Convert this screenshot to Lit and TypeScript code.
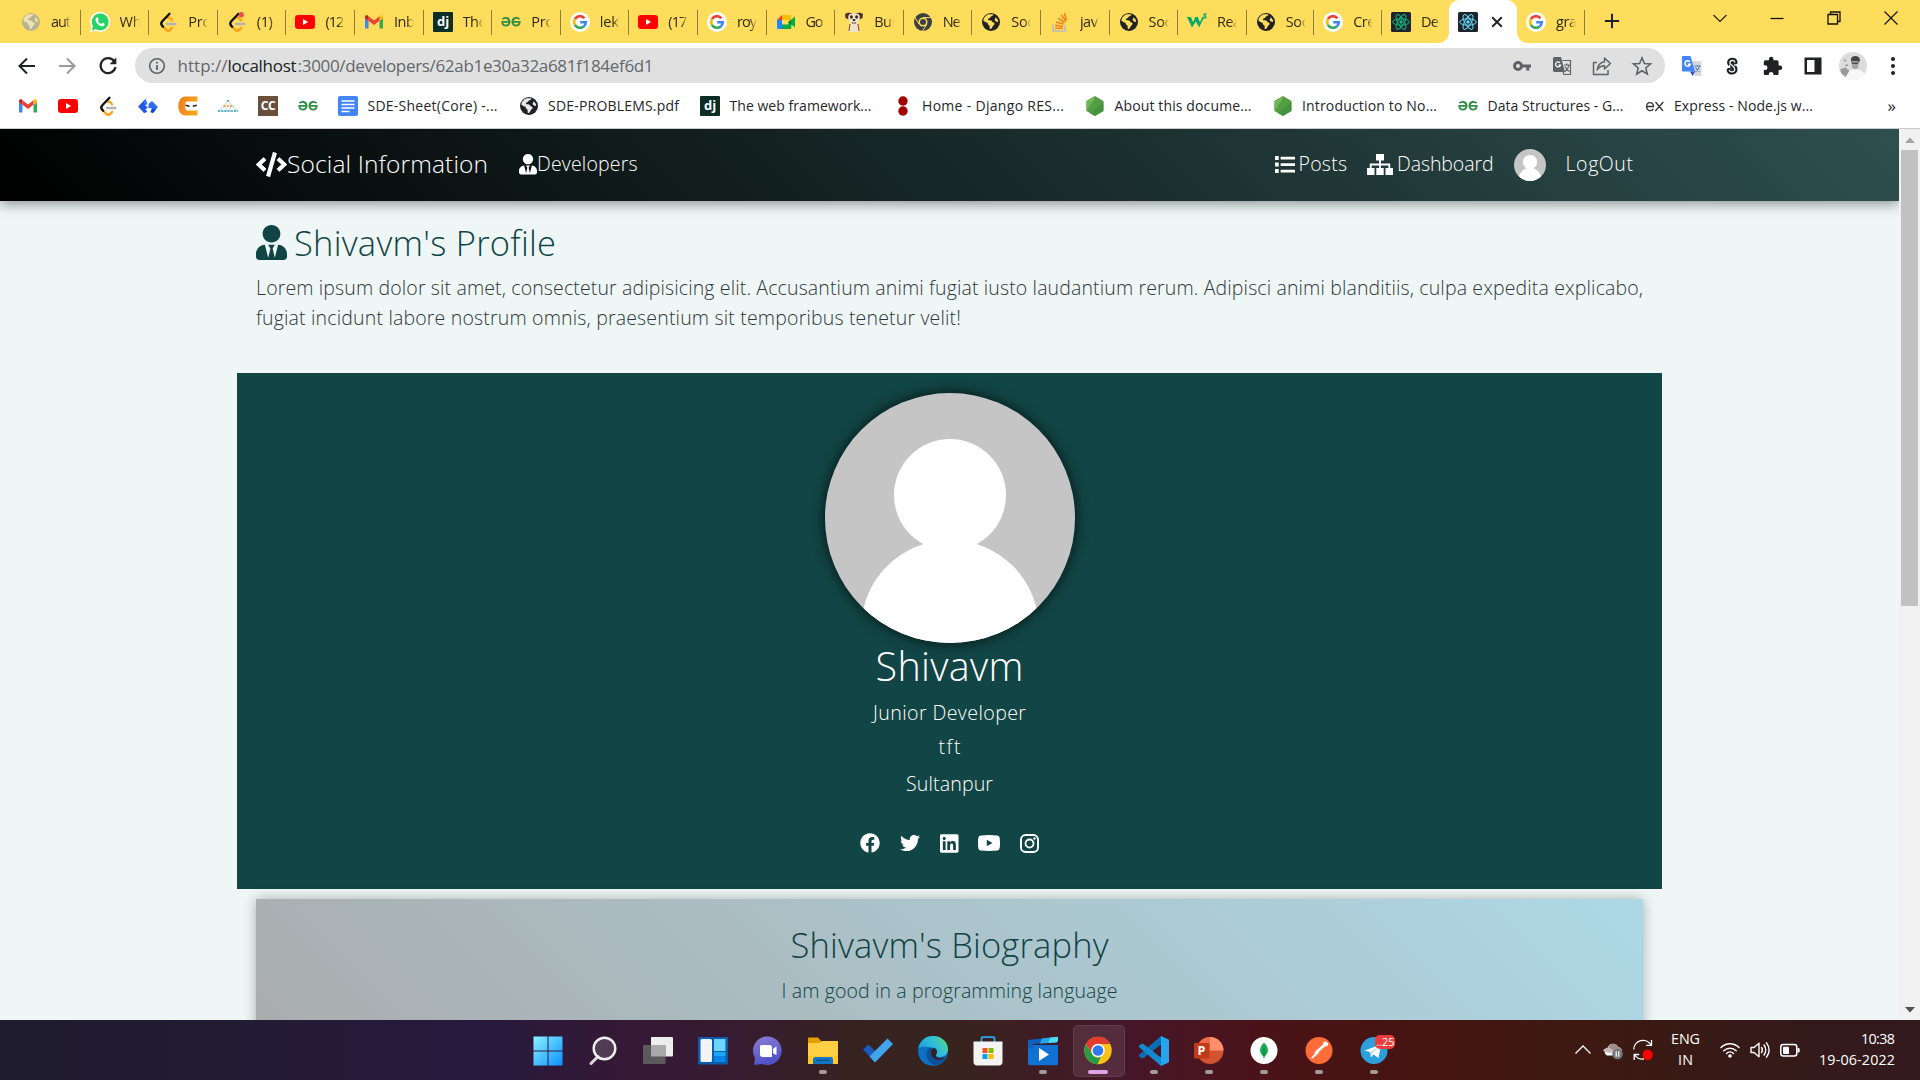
import { LitElement, html, svg, css } from "lit";
import { customElement, property } from "lit/decorators.js";

/** A single line of text whose tracking is adjusted to fill a given width. */
@customElement("text-run")
class TextRun extends LitElement {
  @property() text = "";
  @property({ type: Number }) w = 0;
  static styles = css`
    :host { display: block; white-space: nowrap; flex: none; }
    span { display: inline-block; white-space: pre; }
  `;
  render() {
    return html`<span>${this.text}</span>`;
  }
  updated() {
    const s = this.renderRoot.querySelector("span") as HTMLElement;
    s.style.letterSpacing = "0";
    const n = Math.max(1, this.text.length - 1);
    const natural = s.getBoundingClientRect().width;
    if (this.w) {
      s.style.letterSpacing = (this.w - natural) / n + "px";
      this.style.width = this.w + "px";
    }
  }
}

const t = (text: string, w = 0, cls = "") => html`<text-run class=${cls} .text=${text} .w=${w}></text-run>`;

const USER_TIE = "M224 256c70.7 0 128-57.3 128-128S294.7 0 224 0 96 57.3 96 128s57.3 128 128 128zm95.8 32.6L272 480l-32-136 32-56h-96l32 56-32 136-47.8-191.4C56.9 292 0 350.3 0 422.4V464c0 26.5 21.5 48 48 48h352c26.5 0 48-21.5 48-48v-41.6c0-72.1-56.9-130.4-128.2-133.8z";
const CODE = "M278.9 511.5l-61-17.7c-6.4-1.8-10-8.5-8.2-14.9L346.2 8.7c1.8-6.4 8.5-10 14.9-8.2l61 17.7c6.4 1.8 10 8.5 8.2 14.9L293.8 503.3c-1.9 6.4-8.5 10.1-14.9 8.2zm-114-112.2l43.5-46.4c4.6-4.9 4.3-12.7-.8-17.2L117 256l90.6-79.7c5.1-4.5 5.5-12.3.8-17.2l-43.5-46.4c-4.5-4.8-12.1-5.1-17-.5L3.8 247.2c-5.1 4.7-5.1 12.8 0 17.5l144.1 135.1c4.9 4.6 12.5 4.4 17-.5zm327.2.6l144.1-135.1c5.1-4.7 5.1-12.8 0-17.5L492.1 112.1c-4.8-4.5-12.4-4.3-17 .5L431.6 159c-4.6 4.9-4.3 12.7.8 17.2L523 256l-90.6 79.7c-5.1 4.5-5.5 12.3-.8 17.2l43.5 46.4c4.5 4.9 12.1 5.1 17 .6z";
const FACEBOOK = "M504 256C504 119 393 8 256 8S8 119 8 256c0 123.78 90.69 226.38 209.25 245V327.69h-63V256h63v-54.64c0-62.15 37-96.48 93.67-96.48 27.14 0 55.52 4.84 55.52 4.84v61h-31.28c-30.8 0-40.41 19.12-40.41 38.73V256h68.78l-11 71.69h-57.78V501C413.31 482.38 504 379.78 504 256z";
const TWITTER = "M459.37 151.716c.325 4.548.325 9.097.325 13.645 0 138.72-105.583 298.558-298.558 298.558-59.452 0-114.68-17.219-161.137-47.106 8.447.974 16.568 1.299 25.34 1.299 49.055 0 94.213-16.568 130.274-44.832-46.132-.975-84.792-31.188-98.112-72.772 6.498.974 12.995 1.624 19.818 1.624 9.421 0 18.843-1.3 27.614-3.573-48.081-9.747-84.143-51.98-84.143-102.985v-1.299c13.969 7.797 30.214 12.67 47.431 13.319-28.264-18.843-46.781-51.005-46.781-87.391 0-19.492 5.197-37.36 14.294-52.954 51.655 63.675 129.3 105.258 216.365 109.807-1.624-7.797-2.599-15.918-2.599-24.04 0-57.828 46.782-104.934 104.934-104.934 30.213 0 57.502 12.67 76.67 33.137 23.715-4.548 46.456-13.32 66.599-25.34-7.798 24.366-24.366 44.833-46.132 57.827 21.117-2.273 41.584-8.122 60.426-16.243-14.292 20.791-32.161 39.308-52.628 54.253z";
const LINKEDIN = "M416 32H31.9C14.3 32 0 46.5 0 64.3v383.4C0 465.5 14.3 480 31.9 480H416c17.6 0 32-14.5 32-32.3V64.3c0-17.8-14.4-32.3-32-32.3zM135.4 416H69V202.2h66.5V416zm-33.2-243c-21.3 0-38.5-17.3-38.5-38.5S80.9 96 102.2 96c21.2 0 38.5 17.3 38.5 38.5 0 21.3-17.2 38.5-38.5 38.5zm282.1 243h-66.4V312c0-24.8-.5-56.7-34.5-56.7-34.6 0-39.9 27-39.9 54.9V416h-66.4V202.2h63.7v29.2h.9c8.9-16.8 30.6-34.5 62.9-34.5 67.2 0 79.7 44.3 79.7 101.9V416z";

const globe = (dark: string, land: string) => svg`
  <circle cx="10" cy="10" r="9" fill=${dark}/>
  <path fill=${land} d="M7 2.6c1.6-.6 4-.6 5.500 0-.4 1.300-1.400 1.700-2.600 1.900-.5 1.300-1.500 2-2.900 2.300-.3 1 .3 1.500 1.400 1.500 1.800-.2 2.700.6 3.200 1.900 1.600 0 2.300 1 1.900 2.100-.8 1.200-1.900 1.700-2.400 3.200-.4 1-1.400 1.600-2.300 1.600l-.3-3.700c-1.200-.4-1.900-1.300-1.900-2.600-1.600-.3-3.100-1-4.300-2.200C2.600 6 4.500 3.600 7 2.600zM14.600 5.200c1.500 1.200 2.500 2.900 2.600 4.600-1.400.4-3-.2-3.600-1.700.2-1.200.9-1.600 1-2.900z"/>`;
const react = (bg: string, fg: string) => svg`
  <rect width="20" height="20" rx="1.500" fill=${bg}/>
  <g fill="none" stroke=${fg} stroke-width="1"><ellipse cx="10" cy="10" rx="8.300" ry="3.200"/><ellipse cx="10" cy="10" rx="8.300" ry="3.200" transform="rotate(60 10 10)"/><ellipse cx="10" cy="10" rx="8.300" ry="3.200" transform="rotate(120 10 10)"/></g><circle cx="10" cy="10" r="1.700" fill=${fg}/>`;
const leet = svg`<g fill="none" stroke-linecap="round" stroke-width="2.300"><path stroke="#b3b3b3" d="M9 12h8.500"/><path stroke="#ffa116" d="M4.600 14l3.400 3.600c1.300 1.300 3.200 1.300 4.500 0l1.700-1.700M14 8.200l-1.600-1.700c-1-.9-2.300-1.200-3.500-.8"/><path stroke="#111" d="M11.500 1.800L4.300 9.300c-1.200 1.300-1.200 3.300 0 4.600l.8.900"/></g>`;
const youtube = svg`<rect x="0" y="3" width="20" height="14" rx="3.200" fill="#f00"/><path fill="#fff" d="M8 7l5.200 3L8 13z"/>`;
const gmail = svg`<path fill="#4285f4" d="M1 16.500h3.500V8.800L1 6z"/><path fill="#34a853" d="M15.500 16.500H19V6l-3.500 2.800z"/><path fill="#fbbc04" d="M15.500 4.200v4.600L19 6.200V5c0-1.600-1.700-2.300-2.900-1.400z"/><path fill="#ea4335" d="M4.500 8.800V4.200L10 8.400l5.500-4.200v4.600L10 13z"/><path fill="#c5221f" d="M1 5v1.200l3.500 2.600V4.200L3.900 3.600C2.700 2.700 1 3.400 1 5z"/>`;
const google = svg`<circle cx="10" cy="10" r="10" fill="#fff"/><g fill="none" stroke-width="2.600"><path stroke="#ea4335" d="M14.500 6.300A5.800 5.800 0 0 0 4.900 7.200"/><path stroke="#fbbc05" d="M4.900 7.200a5.800 5.800 0 0 0 0 5.600"/><path stroke="#34a853" d="M4.900 12.800a5.800 5.800 0 0 0 8.800 1.600"/><path stroke="#4285f4" d="M13.700 14.400A5.800 5.800 0 0 0 15.800 10.200H10.200"/></g>`;
const gfg = svg`<g fill="none" stroke="#2f8d46" stroke-width="1.900"><path d="M1.600 7.200c1.500-2 6.700-2 6.900 2.400.1 2.600-1.700 4-3.600 4-2.200 0-3.700-1.600-3.600-3.700h8.200"/><path d="M18.400 7.200c-1.500-2-6.700-2-6.900 2.400-.1 2.600 1.700 4 3.600 4 2.200 0 3.700-1.600 3.600-3.700h-8.200"/></g>`;
const django = svg`<rect width="20" height="20" rx="1" fill="#0c2e25"/><text x="10.200" y="14.200" text-anchor="middle" font-family="Open Sans, sans-serif" font-weight="700" font-size="13" fill="#fff">dj</text>`;
const node = svg`<path fill="#539e43" d="M10 0l8.500 5v10L10 20l-8.500-5V5z"/><path fill="#6cb654" d="M10 0L1.500 5v10L9 4z"/><path fill="#3f8b3c" d="M18.500 6v9L10 20 5 17.500z" opacity=".6"/>`;
const so = svg`<path fill="none" stroke="#bcbbbb" stroke-width="1.600" d="M3 12.500V19h12v-6.500"/><g stroke="#f48024" stroke-width="1.600"><path d="M5 16.200h8M5.200 13.400l7.900.8M6.100 9.900l7.500 2.200M8.200 6.200l6.500 4.300M11.300 2.900l4.600 6.300M14.500 1l1.900 7.500"/></g>`;
const glyphs: Record<string, unknown> = {
  globeGrey: globe("#b9b28f", "#eee3b4"),
  globe: globe("#202124", "#e8eaed"),
  globeTab: globe("#202124", "#ffdd5c"),
  whatsapp: svg`<path fill="#fff" d="M0 20l1.500-5A10 10 0 1 1 5.500 18.700z"/><path fill="#25d366" d="M1.800 18.300l1.200-4A8.400 8.400 0 1 1 6 17.200z"/><path fill="#fff" d="M7 5.300c.5-.2.9 0 1 .4l.7 1.700c.1.600-.7 1.100-.8 1.500.7 1.500 1.800 2.500 3.200 3.100.5-.1 1-1.200 1.400-1.200l2 .9c.5.300-.1 1.900-.7 2.300-3 1.500-8.200-2.900-8.300-6.300 0-.9.700-2.100 1.500-2.400z"/>`,
  leet,
  leetDot: svg`${leet}<circle cx="14.300" cy="2.700" r="2.600" fill="#eb4d4b"/>`,
  youtube, gmail, django, gfg, google, node, so,
  meet: svg`<path fill="#ea4335" d="M1 8l5-5v5z"/><path fill="#fbbc04" d="M6 3h8c.8 0 1.300.5 1.300 1.300V10h-3V8H6z"/><path fill="#2684fc" d="M1 8h5v9H2.300C1.500 17 1 16.500 1 15.700z"/><path fill="#00ac47" d="M6 12.500h6.300V10h3v5.700c0 .8-.5 1.300-1.300 1.300H6zM15.300 7.500L19 4.500v11l-3.700-3z"/><path fill="#00832d" d="M12.300 10l3-2.500v5z"/>`,
  dog: svg`<path fill="#4b3426" d="M1 2l3-1.500L6 1h8l2-.5L19 2l-.5 4-3 1.500h-11L1.500 6z"/><path fill="#f1e3c8" d="M4.500 3.500C5.500 0 14.500 0 15.500 3.500c.8 2.500 0 5-1.500 7.500l1.700 9H4.300L6 11C4.500 8.500 3.700 6 4.500 3.500z"/><ellipse cx="7.400" cy="5" rx="1.500" ry="1.700" fill="#3c2a20"/><ellipse cx="12.600" cy="5" rx="1.500" ry="1.700" fill="#3c2a20"/><ellipse cx="10" cy="8" rx="1.500" ry="1" fill="#222"/><path stroke="#8b5b3b" stroke-width="1.200" fill="none" d="M8 10.500q2 1.500 4 0M6 12l-1 7M14 12l1 7"/>`,
  chromeDark: svg`<circle cx="10" cy="10" r="9" fill="#3c4043"/><circle cx="10" cy="10" r="4.500" fill="#ffdd5c"/><circle cx="10" cy="10" r="3" fill="#3c4043"/><path stroke="#ffdd5c" stroke-width="1" d="M10 5.600h8.500M6.100 12.200L1.900 5.500M13.800 12.300L9.500 19"/>`,
  w3: svg`<path fill="#04aa6d" d="M0 5h3.900l2.300 5.200L8.300 5h2.400l2.300 5.200L15.200 5h1.900l-4.900 10.500L8.900 9.600 5 15.500z"/><path fill="none" stroke="#04aa6d" stroke-width="1.200" d="M16.300 2.100h2.600L17.200 4c2.600 0 2.300 3-.9 2.100"/>`,
  reactGreen: react("#20232a", "#10b981"),
  reactBlue: react("#20232a", "#61dafb"),
  hackr: svg`<path fill="#2457e6" d="M0 10.500L7.500 3 9 7.500 7 9.500l3 1.500-2.500 2.500L9.500 16 6 17z"/><path fill="#3d77f7" d="M5.500 5L7.500 3l2 5-2.500 1.500z"/><path fill="#2f6bf5" d="M10.500 8L14 5l6 6-5 6-2.500-1 1.500-3.500-3.500-.500z"/><path fill="#1747c9" d="M12.500 16L15 17l3-3.500-4-1z"/>`,
  ninja: svg`<defs><linearGradient id="nj" x2="1" y2=".3"><stop stop-color="#ee7c1b"/><stop offset="1" stop-color="#fba41d"/></linearGradient></defs><path fill="url(#nj)" d="M19.500.500v5H9C6.500 5.500 6.500 14.500 9 14.500h10.500v5H7.500C-2 19.500-2 .500 7.500.500z"/><path fill="none" stroke="#222" stroke-width="1.500" d="M7.500 9.200l4 1M18.800 9.200l-4 1"/>`,
  dots: svg`<g fill="none" stroke-width="2.200" stroke-dasharray="2 1.200"><path stroke="#35b5c6" d="M9 5h2.200M0 15h20"/><path stroke="#f2a33c" d="M5.500 10h10"/></g><path fill="none" stroke="#a5b9bd" stroke-width=".7" d="M10 5L1 15h18L10 5zM6 10l4 5 4-5"/>`,
  cc: svg`<rect width="20" height="20" fill="#6b4f3c"/><text x="10" y="14" text-anchor="middle" font-family="Open Sans, sans-serif" font-weight="700" font-size="12" letter-spacing="-.5" fill="#fff">CC</text>`,
  docs: svg`<rect width="20" height="20" rx="2" fill="#4285f4"/><path stroke="#fff" stroke-width="1.700" d="M3.500 5h13M3.500 8.500h13M3.500 12h13M3.500 15.500h8"/>`,
  drf: svg`<circle cx="10" cy="5" r="4.700" fill="#a30000"/><circle cx="10" cy="15" r="4.700" fill="#a30000"/>`,
  ex: svg`<g fill="none" stroke="#333" stroke-width="1.300"><path d="M1.800 10.500h6.700c0-5.500-6.900-5-6.900 0 0 4.800 5.600 5.300 6.700 2.300M10.500 6l7.500 9M18.300 6l-8 9"/></g>`,
  back: svg`<path fill="none" stroke="#202124" stroke-width="2" d="M18 10H3M10 2.500L2.500 10l7.500 7.500"/>`,
  fwd: svg`<path fill="none" stroke="#9a9a9a" stroke-width="2" d="M2 10h15M10 2.500l7.500 7.500-7.500 7.500"/>`,
  reload: svg`<path fill="none" stroke="#202124" stroke-width="2.200" d="M16.200 5.200A7.500 7.500 0 1 0 17.500 11"/><path fill="#202124" d="M18.300 1.500v6.700h-6.700z"/>`,
  info: svg`<circle cx="10" cy="10" r="7.300" fill="none" stroke="#5f6368" stroke-width="1.600"/><path stroke="#5f6368" stroke-width="1.800" d="M10 9v5M10 5.800v1.800"/>`,
  key: svg`<path fill="#5f6368" fill-rule="evenodd" d="M6 5a5 5 0 1 1 0 10A5 5 0 0 1 6 5zm0 3a2 2 0 1 0 0 4 2 2 0 0 0 0-4z"/><path fill="#5f6368" d="M10 8.500h9v3h-1.700v3h-3v-3H10z"/>`,
  translate: svg`<path fill="#5f6368" d="M2.500 1H9l4 15H2.500C1.700 16 1 15.300 1 14.500v-12C1 1.700 1.700 1 2.500 1z"/><path fill="none" stroke="#5f6368" stroke-width="1.200" d="M10.500 4.500h8v14H12l-1-3M12 9h6M15 7.500V9M17 9c-.5 3-2 5-4 6.500M13 10.500c1 2.500 2.500 4 4.500 5"/><path stroke="#fff" fill="none" stroke-width="1.200" d="M8 6.800A2.500 2.500 0 1 0 8.500 9H6.300"/>`,
  share: svg`<path fill="none" stroke="#5f6368" stroke-width="1.500" stroke-linejoin="round" d="M5 6.500H1.500V18.500h14.500V14M12.500 2l6 5.500-6 5.500v-3.300C9 9.700 6.800 11 5.200 14c.4-4.500 3-7.600 7.300-8.300z"/>`,
  star: svg`<path fill="none" stroke="#5f6368" stroke-width="1.600" d="M10 1.800l2.400 5.700 6.100.5-4.700 4 1.500 6-5.300-3.200L4.700 18l1.500-6-4.700-4 6.100-.5z"/>`,
  gtrans: svg`<path fill="#d5d8dc" d="M9 5h9.500c.6 0 1 .4 1 1v13c0 .6-.4 1-1 1H12z"/><path fill="#4285f4" d="M1 0h7.500l4.500 15.500H1c-.6 0-1-.4-1-1V1c0-.6.4-1 1-1z"/><path fill="#3b4cc0" d="M8 15.500h5L10.500 20z"/><path stroke="#fff" fill="none" stroke-width="1.500" d="M7.800 5.800a2.700 2.700 0 1 0 .5 2.500H5.800"/><path stroke="#5b7fa8" fill="none" stroke-width="1.200" d="M12.500 10h6M15.500 9v1M17.500 10c-.5 2.500-2 4.500-4 6M13.500 11.500c1 2 2.500 3.500 4 4.200"/>`,
  scribe: svg`<path fill="none" stroke="#202124" stroke-width="5.400" stroke-linecap="round" stroke-linejoin="round" d="M12.800 6C12 3.800 8 4 7.800 6.500c-.2 3 5.200 3.200 5 7-.3 3-4.600 3-5.400 1"/><path fill="none" stroke="#fff" stroke-width="1.300" stroke-linecap="round" d="M12.800 6C12 3.800 8 4 7.800 6.500c-.2 3 5.200 3.200 5 7-.3 3-4.600 3-5.400 1M7.500 9.500v1.800M12.900 8.300V9.500"/>`,
  puzzle: svg`<path fill="#202124" d="M18 9.500h-1.400V6c0-1-.8-1.700-1.700-1.700h-3.500V2.900a2.200 2.200 0 0 0-4.400 0v1.400H3.500C2.600 4.300 1.800 5 1.800 6v3.300h1.300a2.400 2.400 0 0 1 0 4.800H1.800v3.300c0 1 .8 1.700 1.700 1.700h3.300v-1.300a2.400 2.400 0 0 1 4.700 0v1.300h3.400c.9 0 1.700-.8 1.700-1.700V14H18a2.200 2.200 0 0 0 0-4.400z"/>`,
  panel: svg`<path fill="#202124" fill-rule="evenodd" d="M1.500 1.500h17v17h-17zM4 4v12h7.500V4z"/>`,
  kebab: svg`<circle cx="10" cy="3" r="2" fill="#202124"/><circle cx="10" cy="10" r="2" fill="#202124"/><circle cx="10" cy="17" r="2" fill="#202124"/>`,
  me: svg`<circle cx="10" cy="10" r="10" fill="#dcdcdc"/><path fill="#444" d="M8.500 5.200c.5-3 6-3.200 6.500.3l-.7 2.300-1-1.300H9.500L9 8z"/><path fill="#a3a3a3" d="M9.200 6.500h4.600v3.800c-.5 2.500-4.200 2.500-4.600 0z"/><path fill="#f7f7f7" d="M5 19c0-3.500 2-5.500 4.500-6.500h3.500c3 0 4.500 1.500 5 3.500a10 10 0 0 1-13 3z"/><path fill="#9a9a9a" d="M.8 12.500l4-1.500 2.500 2.500L5 17.500l-3-1.700zM3 6l2-1v2zM4.500 9h2v1h-2z"/><path stroke="#333" stroke-width=".8" d="M9.200 8h4.600"/>`,
  plus: svg`<path stroke="#202124" stroke-width="2.300" d="M10 2v16M2 10h16"/>`,
  close: svg`<path stroke="#202124" stroke-width="2.400" d="M4 4l12 12M16 4L4 16"/>`,
  down: svg`<path fill="none" stroke="#202020" stroke-width="1.200" d="M3.500 7l6.500 6.500L16.500 7"/>`,
  min: svg`<path stroke="#111" stroke-width="1.300" d="M3.500 10.500h13"/>`,
  max: svg`<path fill="none" stroke="#111" stroke-width="1.300" d="M4 6.500h9.500V16H4zM6.500 6V4H16v9.500h-2"/>`,
  x: svg`<path stroke="#111" stroke-width="1.200" d="M3.500 3.500l13 13M16.500 3.500l-13 13"/>`,
  list: svg`<path fill="#fff" d="M1 2h3.500v3.800H1zM1 8.200h3.500V12H1zM1 14.400h3.500v3.800H1zM6.300 2.700H20v2.500H6.300zM6.300 8.900H20v2.500H6.300zM6.300 15H20v2.500H6.300z"/>`,
};
const ic = (name: string, size = 20) => html`<svg class="ic" width=${size} height=${size} viewBox="0 0 20 20">${glyphs[name]}</svg>`;
const fa = (d: string, vw: number, w: number, h: number) => html`<svg class="ic" width=${w} height=${h} viewBox="0 0 ${vw} 512" preserveAspectRatio="none"><path fill="currentColor" d=${d} /></svg>`;
const person = (size: number, id: string) => html`<svg class="ic person" width=${size} height=${size} viewBox="0 0 250 250"><clipPath id=${id}><circle cx="125" cy="125" r="125"/></clipPath><g clip-path="url(#${id})"><rect width="250" height="250" fill="#c5c5c5"/><circle cx="125" cy="102" r="56" fill="#fff"/><circle cx="125" cy="236" r="89" fill="#fff"/></g></svg>`;

const tabs: [string, string, number][] = [
  ["globeGrey", "aut", 20], ["whatsapp", "Wh", 22], ["leet", "Pro", 23], ["leetDot", "(1)", 16], ["youtube", "(12", 19],
  ["gmail", "Inb", 21], ["django", "The", 24], ["gfg", "Pro", 23], ["google", "lek", 19], ["youtube", "(17", 19],
  ["google", "roy", 20], ["meet", "Go", 18], ["dog", "Bui", 21], ["chromeDark", "Ne", 18], ["globeTab", "Soc", 23],
  ["so", "jav", 18], ["globeTab", "Soc", 23], ["w3", "Rea", 24], ["globeTab", "Soc", 23], ["google", "Cre", 22],
  ["reactGreen", "De", 18], ["reactBlue", "", 0], ["google", "gra", 21],
];
const marks: [string, string, number][] = [
  ["gmail", "", 0], ["youtube", "", 0], ["leet", "", 0], ["hackr", "", 0], ["ninja", "", 0], ["dots", "", 0], ["cc", "", 0], ["gfg", "", 0],
  ["docs", "SDE-Sheet(Core) -...", 130], ["globe", "SDE-PROBLEMS.pdf", 131], ["django", "The web framework...", 142],
  ["drf", "Home - Django RES...", 142], ["node", "About this docume...", 137], ["node", "Introduction to No...", 135],
  ["gfg", "Data Structures - G...", 136], ["ex", "Express - Node.js w...", 139],
];

const apps: [unknown, string][] = [
  [svg`<defs><linearGradient id="w" x2="1" y2="1"><stop stop-color="#8af4ff"/><stop offset="1" stop-color="#0a8fff"/></linearGradient></defs><path fill="url(#w)" d="M.5.500h14v14H.5zM15.500.5h14v14h-14zM.5 15.500h14v14H.5zM15.500 15.500h14v14h-14z"/>`, ""],
  [svg`<path stroke="#d9d9d9" stroke-width="3" stroke-linecap="round" d="M3 27.500l7-7"/><circle cx="16.500" cy="12.500" r="10.800" fill="#fff" fill-opacity=".15" stroke="#f0f0f0" stroke-width="2.400"/>`, ""],
  [svg`<rect x="8" y="1" width="22" height="19.500" rx="1" fill="#ededed"/><rect x="0" y="9" width="22.500" height="19" rx="1" fill="#5a5a5a"/><path fill="#a9a9a9" d="M8 9h14.500v11.500H8z"/>`, ""],
  [svg`<rect width="30" height="27.500" y="1" rx="1" fill="#0b5cad"/><rect x="2.500" y="3" width="11.500" height="23" rx="1.500" fill="#f3f3f3"/><path fill="#6bd5fc" d="M16 3h11.500v12H16z"/><path fill="#1aa7f7" d="M16 16h11.500v4.500H16z"/><path fill="#0a84ea" d="M16 20.500h11.500V26H16z"/>`, ""],
  [svg`<defs><linearGradient id="c" x2=".3" y2="1"><stop stop-color="#8b7ed4"/><stop offset="1" stop-color="#5051c9"/></linearGradient></defs><path fill="url(#c)" d="M1 29l1-7A14.300 14.300 0 1 1 9 28z"/><path fill="#fff" d="M8 9h8.500c1.500 0 2.500 1 2.500 2.500V21H9.500C8 21 7 20 7 18.500V10zM20 13l3.500-2.700v9L20 17z"/>`, ""],
  [svg`<path fill="#e2a100" d="M0 2.500C0 2 .5 1.500 1 1.500h9L13 5v6H0z"/><path fill="#ffd044" d="M0 7h11l3-2h15c.6 0 1 .4 1 1v22H0z"/><path fill="#ffc320" d="M0 20h30v8H0z" opacity=".6"/><path fill="#1077c8" d="M5 28v-4.500c0-1.400.9-2.500 2.500-2.500h15c1.600 0 2.500 1.100 2.500 2.500V28z"/><path stroke="#0a4a86" stroke-width="1.200" d="M8.500 24.300h13"/>`, "on"],
  [svg`<path fill="#185abd" d="M0 13.500L5.500 8.500 16 19l-5 6z"/><path fill="#41a5ee" d="M6.500 20.500L24.500 2.500l5.500 5.500L12 26.500z"/>`, ""],
  [svg`<defs><linearGradient id="e" x2="1" y1=".5"><stop stop-color="#1a9fe0"/><stop offset=".55" stop-color="#35c1d5"/><stop offset="1" stop-color="#5ee05a"/></linearGradient></defs><circle cx="15" cy="15" r="15" fill="#0c70c4"/><path fill="url(#e)" d="M.2 13C1.500 4.500 8 0 15 0c9 0 15 6.500 15 13 0 5-4 8-8 8-3.500 0-4.500-1.500-4-2.500 2-3 .5-6.500-3.500-7C8 10.800 2 10 .2 13z"/><path fill="#0d4f98" d="M11 12c-5 5-2 15 6 17 4 0 8.500-3 10.500-7-6 3-13 1-14-4-.2-3 0-4.500 1.500-6z"/><path fill="#33211f" d="M16 12c3 .5 4 4 2 7-.8 1.500 1 3 4.500 3 3 0 5-1 6.500-2.500-2 3.500-6.500 4.500-10 4-5-1-7-6-5.500-9.500z"/>`, ""],
  [svg`<path fill="none" stroke="#29a9ea" stroke-width="1.800" d="M8.500 6V2.500c0-.8.500-1.300 1.300-1.300h10.400c.8 0 1.300.5 1.300 1.300V6"/><path fill="#f3f3f3" d="M.5 5.500h29V26c0 2-1.500 3.500-3.500 3.500H4C2 29.500.5 28 .5 26z"/><path fill="#f25022" d="M9.500 12h5v5h-5z"/><path fill="#7fba00" d="M15.500 12h5v5h-5z"/><path fill="#00a4ef" d="M9.500 18h5v5h-5z"/><path fill="#ffb900" d="M15.500 18h5v5h-5z"/>`, ""],
  [svg`<path fill="#1272d4" d="M0 9h30v18.500c0 1-.6 1.700-1.500 1.700h-27C.6 29.200 0 28.500 0 27.500z"/><path fill="#0d62c2" d="M0 4l29-3v5.500L5 8v4.500H0z"/><path fill="#1fa9ea" d="M14 2.500L22 1.600 20 7l-8 .5z"/><path fill="#50d9f5" d="M22 1.600L30 .8V5l-1.500 1.500L20 7z"/><path fill="#fff" d="M11 12l10 6.500L11 25z"/>`, "on"],
  [svg`<circle cx="15" cy="14.500" r="13.700" fill="#fbc116"/><path fill="#e33b2e" d="M3 7.900A13.700 13.700 0 0 1 27 8H15l-6 9.500z"/><path fill="#269a49" d="M3 7.900l6.300 10.500c2 3 5.500 3.800 8.500 2.500L14.500 28.200A13.700 13.700 0 0 1 3 7.900z"/><circle cx="15" cy="14.500" r="6.800" fill="#fff"/><circle cx="15" cy="14.500" r="5.300" fill="#3079ee"/>`, "active"],
  [svg`<path fill="#0b6eb5" d="M22 0L.5 18.500c-.8.7-.8 1.500 0 2.200L2.500 22c.7.500 1.400.5 2 0L22.500 8z"/><path fill="#1588d1" d="M22 30L.5 11.500c-.8-.7-.8-1.500 0-2.200L2.500 8c.7-.5 1.400-.5 2 0L22.500 22z"/><path fill="#25a5f1" d="M22 0l7 3.200c.6.300 1 .8 1 1.500v20.600c0 .7-.4 1.200-1 1.500L22 30z"/>`, "on"],
  [svg`<circle cx="16" cy="14.500" r="13.500" fill="#d35230"/><path fill="#ff8f6b" d="M16 1a13.500 13.500 0 0 1 13.500 13.500H16z"/><path fill="#ed6c47" d="M16 1v13.500H2.500A13.500 13.500 0 0 1 16 1z"/><rect x="0" y="7" width="15.500" height="15.500" rx="1.300" fill="#c13b1b"/><text x="7.500" y="19" text-anchor="middle" font-family="Open Sans, sans-serif" font-weight="700" font-size="12.500" fill="#fff">P</text>`, "on"],
  [svg`<circle cx="15" cy="14.500" r="13.500" fill="#fff"/><path fill="#13aa52" d="M15 6.500c6 6 4.500 11 0 14.500-4.500-3.500-6-8.500 0-14.500z"/><path stroke="#0b7b3b" stroke-width=".8" d="M15 12v10.500"/>`, "on"],
  [svg`<circle cx="15" cy="14.500" r="13.500" fill="#ff6c37"/><path stroke="#fff" stroke-width="2.800" fill="none" stroke-linecap="round" d="M12 16.500l8-7"/><path stroke="#fff" stroke-width="1.300" d="M7.500 22.500l6-7M15 16l-7.500 6.500"/><circle cx="21.500" cy="8" r="2.500" fill="#fff"/>`, "on"],
  [svg`<circle cx="15" cy="14.500" r="13.500" fill="#2ca0dc"/><path fill="#fff" d="M5.500 14.500L22 8.500 19.500 22l-5-3.500-2.500 3-.8-5.200z"/><path fill="#b9d8ea" d="M11.200 16.300l7.500-5-5.500 6-1.200 4z"/>`, "on tg"],
];

@customElement("app-root")
class AppRoot extends LitElement {
  static styles = css`
    :host { display: block; }
    * { box-sizing: border-box; }
    .ic { display: block; flex: none; overflow: visible; }
    .screen { width: 1920px; height: 1080px; overflow: hidden; display: flex; flex-direction: column; font-family: "Open Sans", "Noto Sans", sans-serif; background: #fff; }
    .strip { height: 43px; background: #ffdd5c; display: flex; flex: none; padding-left: 12px; }
    .tab { height: 43px; width: 68.6px; flex: none; display: flex; align-items: center; padding-left: 9px; background: linear-gradient(#8e7d3c, #8e7d3c) right 10px / 1px 25px no-repeat; }
    .tab.narrow { width: 67.6px; }
    .tab .clip { width: 20px; margin-left: 10px; overflow: hidden; font-size: 14.5px; color: #2e2912; -webkit-mask-image: linear-gradient(90deg, #000 65%, transparent 100%); mask-image: linear-gradient(90deg, #000 65%, transparent 100%); }
    .tab.bare { background: none; }
    .tab.active { background: #fff; border-radius: 10px 10px 0 0; position: relative; }
    .tab.active::before, .tab.active::after { content: ""; position: absolute; bottom: 0; width: 10px; height: 10px; }
    .tab.active::before { left: -10px; background: radial-gradient(circle at 0 0, transparent 9.500px, #fff 10px); }
    .tab.active::after { right: -10px; background: radial-gradient(circle at 100% 0, transparent 9.500px, #fff 10px); }
    .tab.active .ic + .ic { margin-left: 11px; }
    .new { padding: 12px 0 0 18px; }
    .wins { margin-left: auto; display: flex; gap: 37px; padding: 8px 19px 0 0; }
    .bar { height: 43px; flex: none; display: flex; padding-top: 5px; align-items: flex-start; }
    .bar > .btns { display: flex; height: 35px; align-items: center; gap: 20.300px; padding: 0 17px 0 17px; }
    .omni { width: 1530.500px; height: 35px; border-radius: 18px; background: #e0e0e0; display: flex; align-items: center; padding: 0 13px 0 12px; }
    .omni .url { display: flex; margin-left: 11px; font-size: 17px; color: #63676c; line-height: 35px; }
    .omni .host { color: #202124; }
    .omni .url text-run:last-child { margin-left: 1px; }
    .omni .acts { margin-left: auto; display: flex; gap: 20px; }
    .bar > .ext { display: flex; height: 35px; align-items: center; gap: 20.200px; padding-left: 17px; }
    .ext .me { margin: 0 -4px; }
    .marks { height: 42px; flex: none; display: flex; align-items: center; padding: 0 24px 3px 18px; gap: 20px; font-size: 14px; color: #25262a; }
    .mark { display: flex; align-items: center; gap: 9.500px; }
    .mark text-run { margin-right: 1px; }
    .more { margin-left: auto; font-size: 17px; line-height: 20px; }
    .view { height: 892px; flex: none; display: flex; border-top: 1px solid #cbcbcb; }
    .page { width: 1899px; height: 891px; overflow: hidden; background: #eef7f6; font-weight: 300; color: #30363b; }
    .nav { height: 72px; background: linear-gradient(45deg, #000, #2f4f4f); box-shadow: 0 3px 12px rgba(0,0,0,.42); display: flex; color: #fff; padding: 0 266px 0 256px; font-size: 19.500px; font-weight: 350; }
    .nav .grp { display: flex; align-items: center; height: 70px; }
    .nav .brand { font-size: 24.500px; margin: 0 31px 0 0; width: 201px; }
    .nav .right { margin-left: auto; }
    .nav text-run { line-height: 70px; }
    .g3 { margin-left: 4px; } .g20 { margin-left: 20px; }
    .nav .avatar { padding-top: 2px; }
    .head { padding: 19px 256px 0; height: 172px; }
    .head .title { display: flex; align-items: center; gap: 7px; height: 46px; color: #144; font-size: 34.500px; line-height: 46px; }
    .head .title .ic { margin-top: -2px; }
    .head .lead { padding-top: 7px; font-size: 19.500px; line-height: 30px; }
    .card { margin: 0 237px 0 237px; height: 516px; background: #124545; color: #fff; display: flex; flex-direction: column; align-items: center; padding-top: 20px; font-weight: 350; }
    .person { border-radius: 50%; }
    .card .person { box-shadow: 0 0 14px rgba(0,0,0,.75); }
    .card .name { font-size: 39.500px; line-height: 46px; }
    .card .row { font-size: 19.600px; line-height: 34px; margin-top: 7px; }
    .card .org { margin-top: 0; } .card .loc { margin-top: 3px; }
    .social { display: flex; align-items: center; gap: 19.700px; margin-top: 30px; height: 24px; }
    .bio { margin: 10px 256px 0; height: 250px; background: linear-gradient(45deg, darkgray, lightblue); box-shadow: 0 0 12px rgba(0,0,0,.3); color: #144; display: flex; flex-direction: column; align-items: center; padding-top: 22px; }
    .bio .h { font-size: 34.500px; line-height: 48px; }
    .bio .p { font-size: 19.500px; line-height: 30px; margin-top: 7px; }
    .scroll { width: 21px; background: #f1f1f1; display: flex; flex-direction: column; align-items: center; padding: 8px 0 7px; }
    .thumb { width: 17px; height: 456px; background: #c1c1c1; margin: 7px 0 auto; }
    .task { height: 60px; flex: none; display: flex; padding-left: 520px; color: #fff; background: linear-gradient(90deg, #1e1b2d 0, #231b35 250px, #27193d 480px, #351936 620px, #371b30 740px, #36231f 860px, #38231f 960px, #45172a 1120px, #4b1318 1260px, #451511 1430px, #3e1912 1580px, #351a17 1750px, #32191e 1920px); }
    .app { width: 55.100px; height: 60px; display: flex; flex-direction: column; align-items: center; padding-top: 16px; position: relative; }
    .app.on::after, .app.active::after { content: ""; width: 8px; height: 4px; border-radius: 2px; background: #a39a9c; margin-top: 4px; }
    .app .ic { position: relative; top: -.5px; }
    .app.active::after { width: 20px; background: #dc9be6; }
    .app.active::before { content: ""; position: absolute; left: 2.500px; top: 5px; width: 50px; height: 50px; border-radius: 5px; background: rgba(255,255,255,.09); border: 1px solid rgba(255,255,255,.08); }
    .badge { position: absolute; left: 29px; top: 15px; width: 20px; height: 14px; border-radius: 5px; background: #ee3b3b; font-size: 11px; line-height: 13px; text-align: center; }
    .tray { margin-left: auto; display: flex; align-items: center; padding-right: 25px; font-size: 14.300px; line-height: 20.500px; }
    .tray .lang { margin: 0 20px 0 18px; display: flex; flex-direction: column; align-items: center; }
    .tray .sys { display: flex; gap: 10px; }
    .tray .time { margin-left: 19px; display: flex; flex-direction: column; align-items: flex-end; }
    .tray .tri { display: flex; gap: 10px; }
    .tray .lang, .tray .time { padding-bottom: 1px; }
  `;

  renderTab([icon, label, w]: [string, string, number], i: number) {
    const cls = `tab ${i > 17 ? "narrow" : ""} ${i === 21 ? "active" : i === 20 ? "bare" : ""}`;
    return html`<div class=${cls}>${ic(icon)}${i === 21 ? ic("close", 16) : html`<div class="clip">${t(label, w)}</div>`}</div>`;
  }

  render() {
    return html`<div class="screen">
      <div class="strip">
        ${tabs.map((x, i) => this.renderTab(x, i))}
        <div class="new">${ic("plus", 18)}</div>
        <div class="wins">${["down", "min", "max", "x"].map((n) => ic(n))}</div>
      </div>
      <div class="bar">
        <div class="btns">${ic("back")}${ic("fwd")}${ic("reload")}</div>
        <div class="omni">${ic("info")}
          <div class="url">${t("http://", 50)}${t("localhost", 69, "host")}${t(":3000/developers/62ab1e30a32a681f184ef6d1", 356)}</div>
          <div class="acts">${["key", "translate", "share", "star"].map((n) => ic(n))}</div>
        </div>
        <div class="ext">${["gtrans", "scribe", "puzzle", "panel"].map((n) => ic(n))}<div class="me">${ic("me", 28)}</div>${ic("kebab")}</div>
      </div>
      <div class="marks">
        ${marks.map(([n, label, w]) => html`<div class="mark">${ic(n)}${label ? t(label, w) : ""}</div>`)}
        <div class="more">»</div>
      </div>
      <div class="view">
        <div class="page">
          <div class="nav">
            <div class="grp">${fa(CODE, 640, 31, 25)}${t("Social Information", 201, "brand")}${fa(USER_TIE, 448, 18, 20.5)}${t("Developers", 100.5)}</div>
            <div class="grp right">${ic("list", 21)}${t("Posts", 48.5, "g3")}
              <svg class="ic g20" width="26" height="21" viewBox="0 0 26 21"><path fill="#fff" d="M9 0h8v6.500H9zM0 14h7.500v7H0zM9.300 14h7.400v7H9.300zM18.500 14H26v7h-7.500z"/><path fill="none" stroke="#fff" stroke-width="1.800" d="M13 6v8M3.700 14v-3.500h18.600V14"/></svg>
              ${t("Dashboard", 96.5, "g3")}<div class="g20 avatar">${person(32, "a")}</div>${t("LogOut", 67.5, "g20")}</div>
          </div>
          <div class="head">
            <div class="title">${fa(USER_TIE, 448, 31, 35)}${t("Shivavm's Profile", 262)}</div>
            <div class="lead">
              ${t("Lorem ipsum dolor sit amet, consectetur adipisicing elit. Accusantium animi fugiat iusto laudantium rerum. Adipisci animi blanditiis, culpa expedita explicabo,", 1387)}
              ${t("fugiat incidunt labore nostrum omnis, praesentium sit temporibus tenetur velit!", 705)}
            </div>
          </div>
          <div class="card">
            ${person(250, "b")}
            ${t("Shivavm", 148, "name")}
            ${t("Junior Developer", 153, "row")}
            ${t("tft", 22, "row org")}
            ${t("Sultanpur", 87, "row loc")}
            <div class="social">
              ${fa(FACEBOOK, 512, 20, 20)}${fa(TWITTER, 512, 20, 20)}${fa(LINKEDIN, 448, 18.5, 21)}
              <svg class="ic" width="22" height="16" viewBox="0 0 22 16"><path fill="#fff" fill-rule="evenodd" d="M3 .4Q11-.4 19 .4C21.500.7 22 2.500 22 8s-.5 7.300-3 7.600Q11 16.400 3 15.600C.5 15.300 0 13.500 0 8S.5.700 3 .4zM8.800 4.700v6.600L14.500 8z"/></svg>
              <svg class="ic" width="19" height="19" viewBox="0 0 19 19"><rect x="1" y="1" width="17" height="17" rx="4.500" fill="none" stroke="#fff" stroke-width="1.900"/><circle cx="9.500" cy="9.500" r="4" fill="none" stroke="#fff" stroke-width="1.800"/><circle cx="14.500" cy="4.500" r="1.200" fill="#fff"/></svg>
            </div>
          </div>
          <div class="bio">${t("Shivavm's Biography", 318, "h")}${t("I am good in a programming language", 336, "p")}</div>
        </div>
        <div class="scroll">
          <svg class="ic" width="10" height="6" viewBox="0 0 10 6"><path fill="#a3a3a3" d="M0 6l5-5.500L10 6z"/></svg>
          <div class="thumb"></div>
          <svg class="ic" width="10" height="6" viewBox="0 0 10 6"><path fill="#505050" d="M0 0l5 5.500L10 0z"/></svg>
        </div>
      </div>
      <div class="task">
        ${apps.map(([g, cls]) => html`<div class="app ${cls}"><svg class="ic" width="30" height="30" viewBox="0 0 30 30">${g}</svg>${cls.includes("tg") ? html`<div class="badge">..25</div>` : ""}</div>`)}
        <div class="tray">
          <div class="tri">
            <svg class="ic" width="20" height="20" viewBox="0 0 20 20"><path fill="none" stroke="#fff" stroke-width="1.300" d="M2.500 13.500L10 6l7.500 7.500"/></svg>
            <svg class="ic" width="20" height="20" viewBox="0 0 20 20"><path fill="#fff" d="M4 15.500a4 4 0 0 1 .5-7.500C6 3 13 2 15 7c4 .5 4.500 4 4 8.500z"/><path fill="#9d8c89" d="M5 7.500C7 3 13 2 15 7c2.500 0 3.500 1.500 4 4L12 12z"/><path fill="#c9bab7" d="M0 11c1-3 5-4.500 8-2l5 3-7 1z"/><circle cx="14.500" cy="14" r="5.300" fill="#727779"/><path stroke="#fff" stroke-width="1.200" d="M13.200 11.300v5.400M15.800 11.300v5.400"/></svg>
            <svg class="ic" width="20" height="20" viewBox="0 0 20 20"><path fill="none" stroke="#fff" stroke-width="1.300" d="M.8 9.500A9.200 9.200 0 0 1 18 5M18.500 0v5.300h-5.200M11 19C7 19.500 3 17.500 1.500 14.500M1.200 20v-5.500h5"/><circle cx="14.700" cy="14.800" r="5.200" fill="#f00"/></svg>
          </div>
          <div class="lang">${t("ENG", 29)}${t("IN", 15)}</div>
          <div class="sys">
            <svg class="ic" width="20" height="20" viewBox="0 0 20 20"><g fill="none" stroke="#fff" stroke-width="1.500" stroke-linecap="round"><path d="M1 7.500a12.700 12.700 0 0 1 18 0M3.800 10.700a8.800 8.800 0 0 1 12.400 0M6.500 13.500a5 5 0 0 1 7 0"/></g><circle cx="10" cy="16" r="1.800" fill="#fff"/></svg>
            <svg class="ic" width="20" height="20" viewBox="0 0 20 20"><g fill="none" stroke="#fff" stroke-width="1.400" stroke-linecap="round" stroke-linejoin="round"><path d="M1 7.500h3L9 3.300v13.400L4 12.500H1zM11.500 7.500q1.800 2.500 0 5M14 5q3.500 5 0 10M16.500 2.800q5.300 7.200 0 14.400"/></g></svg>
            <svg class="ic" width="20" height="20" viewBox="0 0 20 20"><rect x=".8" y="4.500" width="16" height="11.500" rx="2.500" fill="none" stroke="#fff" stroke-width="1.500"/><rect x="3" y="6.700" width="6" height="7.200" rx="1" fill="#fff"/><path fill="#fff" d="M17.500 8H19c1 0 1 4.500 0 4.500h-1.500z"/></svg>
          </div>
          <div class="time">${t("10:38", 34)}${t("19-06-2022", 76)}</div>
        </div>
      </div>
    </div>`;
  }
}
